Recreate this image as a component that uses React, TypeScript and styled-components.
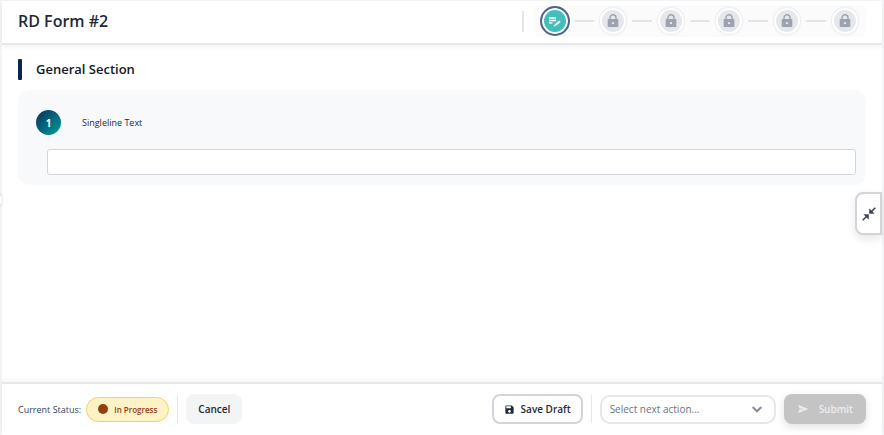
import React from "react";
import styled, { createGlobalStyle } from "styled-components";
import { MdSave } from "react-icons/md";

const GlobalStyle = createGlobalStyle`
  * { box-sizing: border-box; }
  body {
    margin: 0;
    background: #f3f4f6;
    color: #1f2937;
    font-family: "Segoe UI", "Open Sans", "Noto Sans", sans-serif;
    font-size: 9px;
  }
  button, input, select { font: inherit; color: inherit; }
`;

const Page = styled.div`
  position: relative;
  display: flex;
  flex-direction: column;
  min-height: 100vh;
  padding: 1px 2px 0;
`;

const Header = styled.header`
  display: flex;
  align-items: center;
  justify-content: space-between;
  height: 44px;
  padding: 0 16px 2px;
  background: #fff;
  border-bottom: 2px solid #e5e7eb;
  box-shadow: 0 2px 6px rgba(0, 0, 0, 0.05);
  z-index: 1;
`;

const Title = styled.h1`
  margin: 0;
  font-size: 16px;
  line-height: 24px;
  font-weight: 600;
`;

const Progress = styled.div`
  display: flex;
  align-items: center;
  gap: 10px;
`;

const Divider = styled.span<{ $tall?: boolean }>`
  width: ${(p) => (p.$tall ? 1 : 2)}px;
  height: ${(p) => (p.$tall ? 28 : 21)}px;
  background: #e5e7eb;
`;

const Steps = styled.ol`
  display: flex;
  align-items: center;
  margin: 0;
  padding: 1px 6px;
  list-style: none;
  background: #fbfbfb;
  border-radius: 6px;
`;

const Step = styled.li`
  display: flex;
  align-items: center;
  &:not(:first-child)::before {
    content: "";
    width: 20px;
    height: 2px;
    margin: 0 4px;
    border-radius: 1px;
    background: #e2e4ea;
  }
`;

const Marker = styled.span<{ $active?: boolean }>`
  display: flex;
  align-items: center;
  justify-content: center;
  width: ${(p) => (p.$active ? 30 : 26)}px;
  height: ${(p) => (p.$active ? 30 : 26)}px;
  margin: ${(p) => (p.$active ? 0 : 2)}px;
  border: 2px solid ${(p) => (p.$active ? "#52648a" : "#fff")};
  border-radius: 50%;
  background: ${(p) => (p.$active ? "#44bdbd" : "#e5e7eb")};
  color: ${(p) => (p.$active ? "#fff" : "#9ca3af")};
  box-shadow: ${(p) => (p.$active ? "inset 0 0 0 2px #fff" : "0 0 2px 1px #e9ebee")};
`;

const Content = styled.main`
  flex: 1;
  padding: 14px 16px;
  background: #fff;
`;

const SectionTitle = styled.h2`
  display: flex;
  align-items: center;
  gap: 14px;
  margin: 0 0 10px;
  font-size: 13px;
  line-height: 21px;
  font-weight: 600;
  color: #111827;
  &::before {
    content: "";
    width: 4px;
    height: 21px;
    border-radius: 1px;
    background: #0b2450;
  }
`;

const Question = styled.section`
  padding: 20px 10px 10px 18px;
  background: #f8f9fb;
  border-radius: 12px;
`;

const QuestionHead = styled.div`
  display: flex;
  align-items: center;
  gap: 21px;
  margin-bottom: 14px;
`;

const NumberBadge = styled.span`
  display: flex;
  align-items: center;
  justify-content: center;
  width: 25px;
  height: 25px;
  border-radius: 50%;
  color: #fff;
  font-size: 10px;
  font-weight: 700;
  background: linear-gradient(135deg, #0b2e59, #00a09d);
`;

const TextField = styled.input`
  display: block;
  width: calc(100% - 11px);
  height: 26px;
  margin-left: 11px;
  padding: 0 8px;
  background: #fff;
  border: 1px solid #d1d5db;
  border-radius: 3px;
`;

const CollapseButton = styled.button`
  position: absolute;
  right: 2px;
  top: 192px;
  display: flex;
  align-items: center;
  justify-content: center;
  width: 27px;
  height: 43px;
  padding: 0;
  color: #374151;
  background: #fff;
  border: 2px solid #d1d5db;
  border-radius: 8px 0 0 8px;
  box-shadow: 0 4px 10px rgba(0, 0, 0, 0.1);
`;

const DrawerHandle = styled.span`
  position: absolute;
  left: -10px;
  top: 193px;
  width: 12px;
  height: 14px;
  border-radius: 6px;
  background: #fff;
  box-shadow: 0 0 2px rgba(0, 0, 0, 0.25);
`;

const Footer = styled.footer`
  display: flex;
  align-items: center;
  justify-content: space-between;
  height: 53px;
  padding: 0 16px 1px;
  background: #fff;
  border-top: 2px solid #e5e7eb;
  box-shadow: 0 -2px 6px rgba(0, 0, 0, 0.05);
`;

const Group = styled.div`
  display: flex;
  align-items: center;
  gap: 8px;
`;

const StatusGroup = styled.div`
  display: flex;
  align-items: center;
  gap: 5px;
  color: #374151;
`;

const Status = styled.span`
  display: flex;
  align-items: center;
  gap: 6px;
  height: 25px;
  padding: 0 11px;
  border: 1px solid #f9cf58;
  border-radius: 13px;
  background: #fef3c7;
  color: #92400e;
  font-size: 8px;
  font-weight: 600;
  &::before {
    content: "";
    width: 10px;
    height: 10px;
    border-radius: 50%;
    background: #92400e;
  }
`;

const Button = styled.button<{ $kind: "plain" | "outline" | "submit" }>`
  display: flex;
  align-items: center;
  justify-content: center;
  gap: ${(p) => (p.$kind === "submit" ? 10 : 6)}px;
  height: 30px;
  padding: 0 ${(p) => (p.$kind === "submit" ? 13 : p.$kind === "outline" ? 10 : 12)}px;
  border-radius: 8px;
  font-size: 10px;
  font-weight: 600;
  border: ${(p) => (p.$kind === "outline" ? "2px solid #d1d5db" : "0")};
  background: ${(p) => ({ plain: "#f3f4f6", outline: "#fff", submit: "#c4c4c4" })[p.$kind]};
  color: ${(p) => (p.$kind === "submit" ? "#ececec" : "#1f2937")};
  box-shadow: ${(p) => (p.$kind === "submit" ? "0 3px 8px rgba(0, 0, 0, 0.12)" : "none")};
`;

const SelectWrap = styled.div`
  position: relative;
  width: 176px;
  svg {
    position: absolute;
    right: 14px;
    top: 9px;
    pointer-events: none;
  }
`;

const Select = styled.select`
  display: block;
  appearance: none;
  width: 100%;
  height: 29px;
  padding: 0 30px 0 8px;
  border: 2px solid #e5e7eb;
  border-radius: 10px;
  background: #fff;
  color: #6b7280;
  font-size: 10px;
`;

const LockIcon = () => (
  <svg width="12" height="14" viewBox="0 0 12 14">
    <path d="M3 6V3.8a3 3 0 0 1 6 0V6" fill="none" stroke="currentColor" strokeWidth="1.4" />
    <path
      fill="currentColor"
      fillRule="evenodd"
      d="M1.3 5h9.4q.6 0 .6.6v6.8q0 .6-.6.6H1.3q-.6 0-.6-.6V5.6q0-.6.6-.6zM6 7.9a1.2 1.2 0 1 0 0 2.4 1.2 1.2 0 0 0 0-2.4z"
    />
  </svg>
);

const EditIcon = () => (
  <svg width="14" height="14" viewBox="0 0 14 14" stroke="currentColor" fill="none">
    <path d="M1 4.1h7M1 6.5h7" strokeWidth="1.5" />
    <path d="M1 8.9h3.5" strokeWidth="1.3" />
    <path d="M7.2 11.2l4.800-4" strokeWidth="2" />
    <path d="M6 12.200l1.400-.3-.8-1z" fill="currentColor" strokeWidth=".4" />
  </svg>
);

const CollapseIcon = () => (
  <svg width="14" height="14" viewBox="0 0 14 14" fill="currentColor" stroke="currentColor">
    <path d="M9 5l4.3-4.3M5 9L.7 13.3" strokeWidth="1.5" />
    <path d="M7.400 1.800v4.800h4.800zM6.600 12.200V7.400H1.800z" strokeWidth=".4" />
  </svg>
);

const SendIcon = () => (
  <svg width="12" height="10" viewBox="0 0 12 10" fill="currentColor">
    <path d="M1 .8L11.5 5 1 9.2 2.3 5.8 7 5 2.3 4.2z" />
  </svg>
);

const steps = ["Draft", "Step 2", "Step 3", "Step 4", "Step 5", "Step 6"];

export default function App() {
  return (
    <Page>
      <GlobalStyle />
      <Header>
        <Title>RD Form #2</Title>
        <Progress>
          <Divider />
          <Steps aria-label="Progress">
            {steps.map((name, i) => (
              <Step key={name} aria-label={name}>
                <Marker $active={i === 0}>{i === 0 ? <EditIcon /> : <LockIcon />}</Marker>
              </Step>
            ))}
          </Steps>
        </Progress>
      </Header>
      <Content>
        <SectionTitle>General Section</SectionTitle>
        <Question>
          <QuestionHead>
            <NumberBadge>1</NumberBadge>
            <label htmlFor="single-line">Singleline Text</label>
          </QuestionHead>
          <TextField id="single-line" type="text" />
        </Question>
      </Content>
      <Footer>
        <Group>
          <StatusGroup>
            Current Status:
            <Status>In Progress</Status>
          </StatusGroup>
          <Divider $tall />
          <Button type="button" $kind="plain">Cancel</Button>
        </Group>
        <Group>
          <Button type="button" $kind="outline"><MdSave size={11} />Save Draft</Button>
          <Divider $tall />
          <SelectWrap>
            <Select aria-label="Next action" defaultValue="">
              <option value="">Select next action...</option>
            </Select>
            <svg width="10" height="10" viewBox="0 0 10 10" fill="none" stroke="#858ba0" strokeWidth="2">
              <path d="M.7 3L5 7.3 9.3 3" />
            </svg>
          </SelectWrap>
          <Button type="submit" $kind="submit" disabled><SendIcon />Submit</Button>
        </Group>
      </Footer>
      <DrawerHandle />
      <CollapseButton type="button" aria-label="Collapse panel"><CollapseIcon /></CollapseButton>
    </Page>
  );
}
